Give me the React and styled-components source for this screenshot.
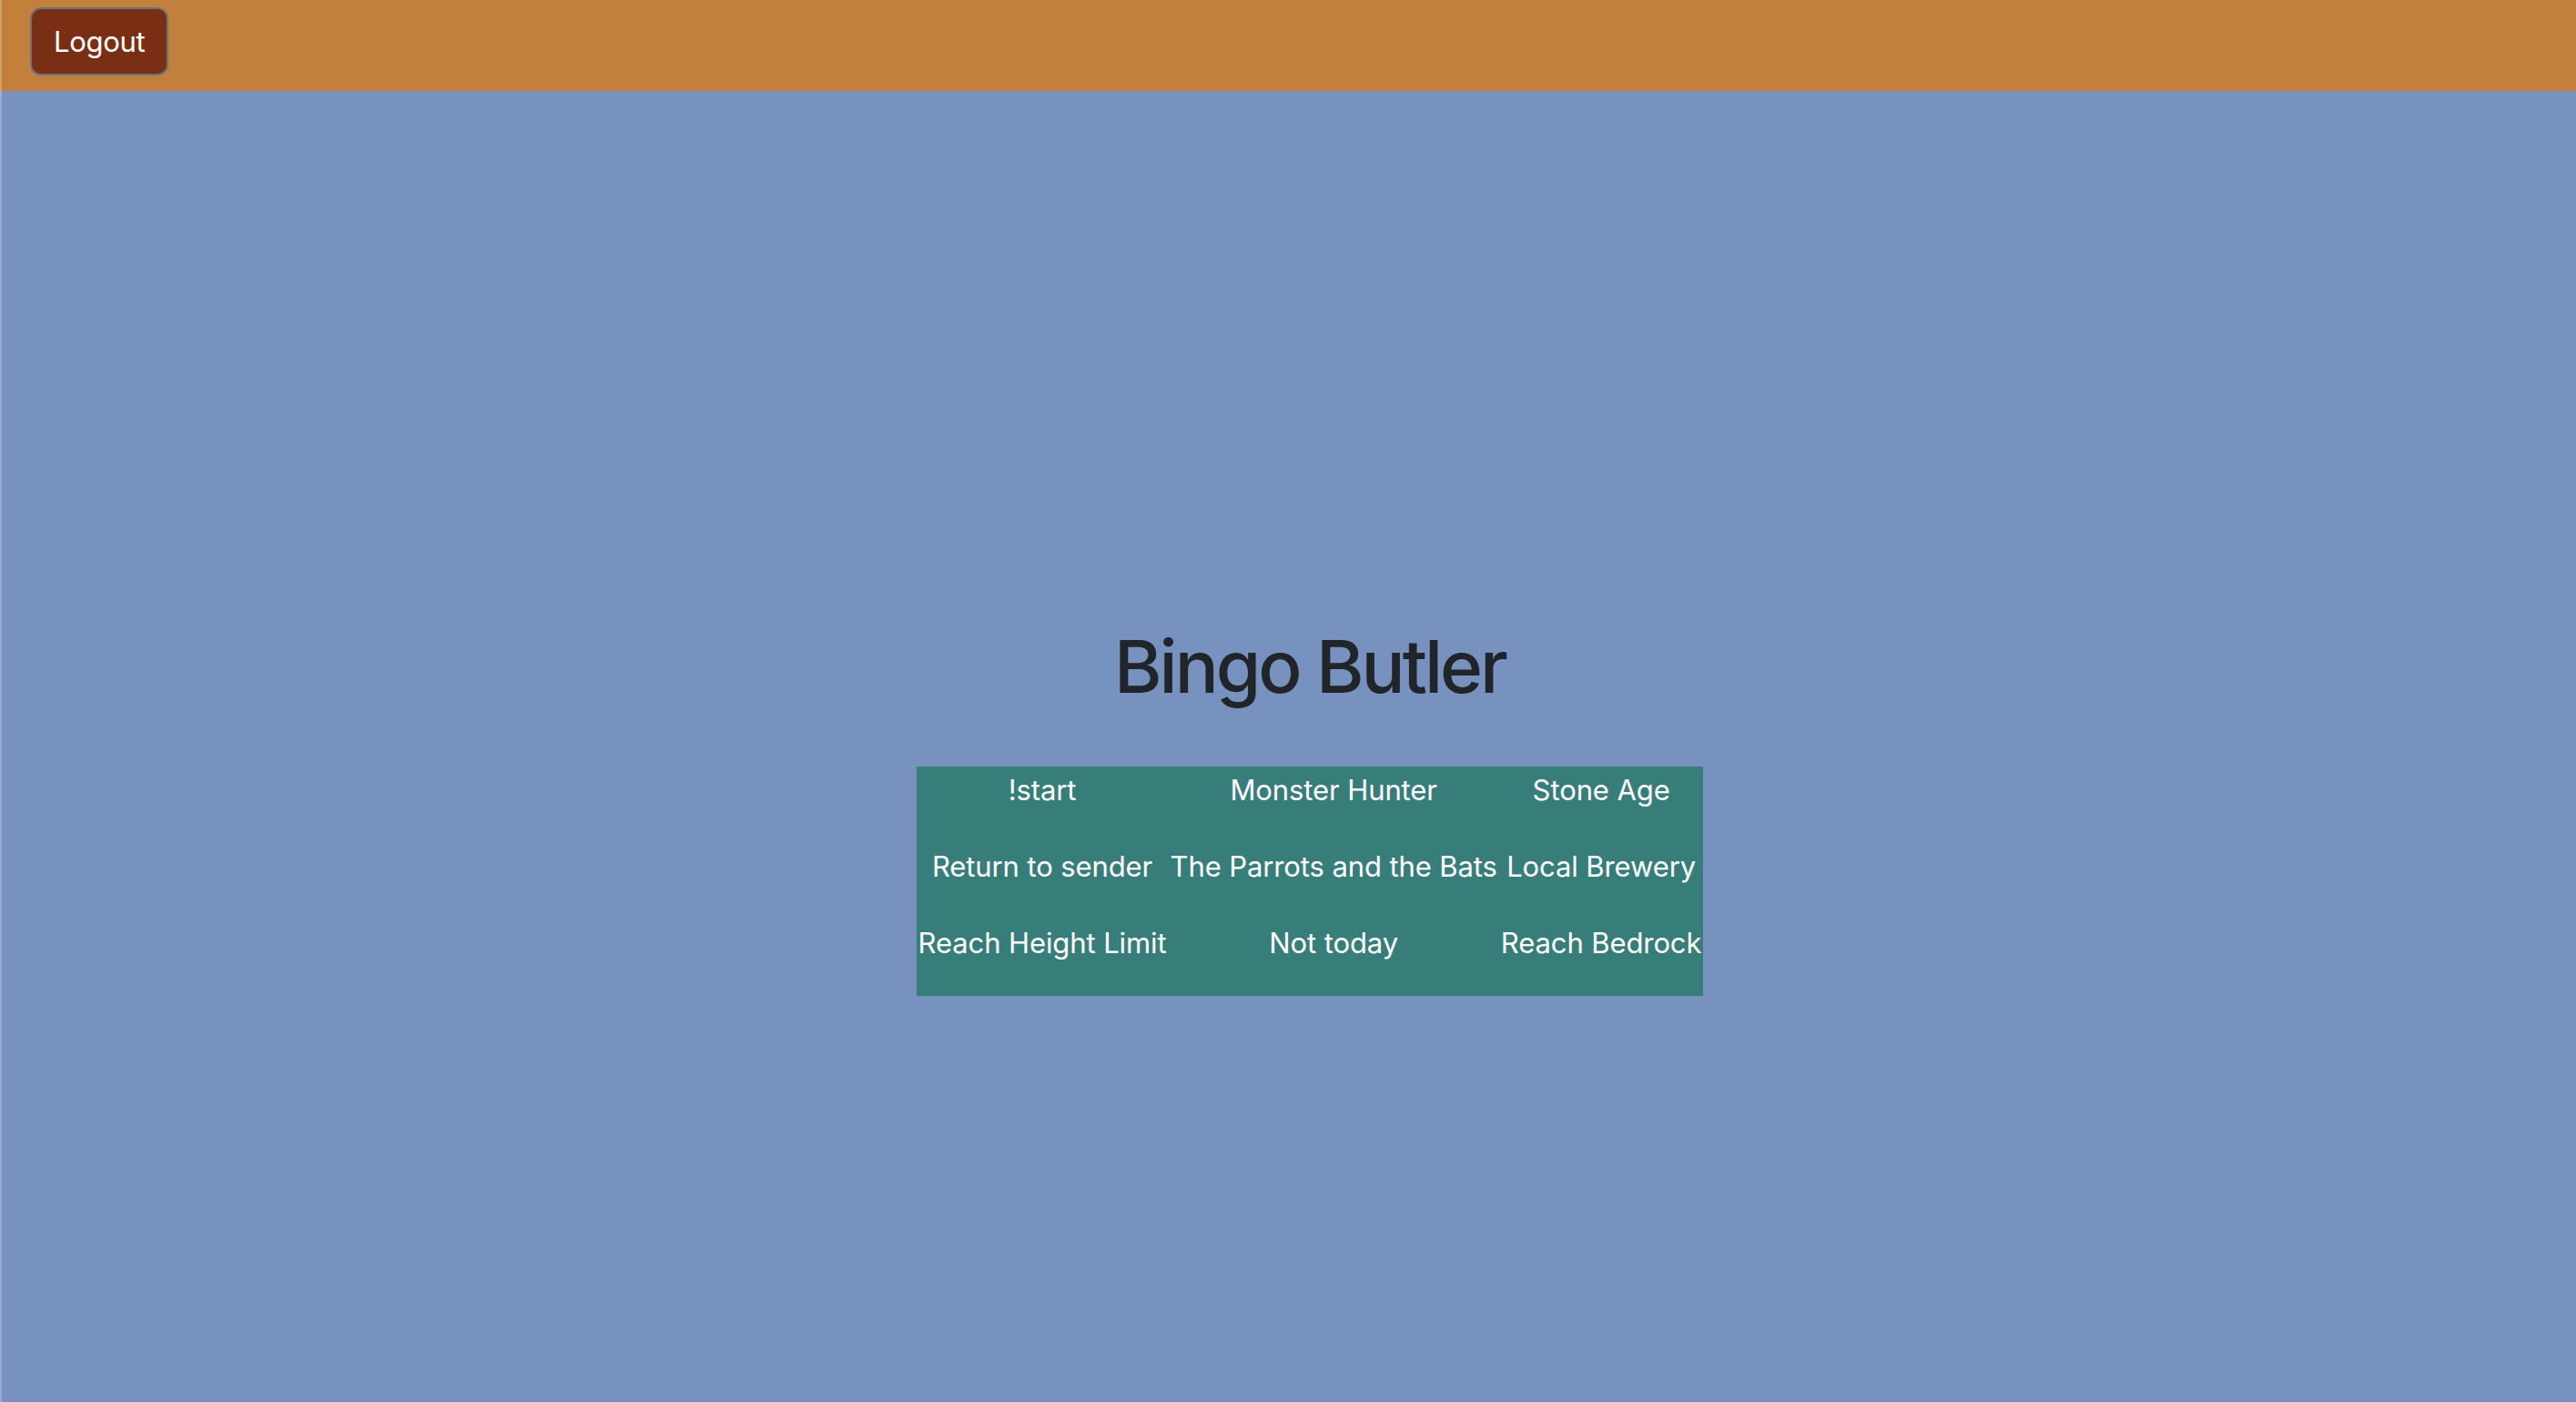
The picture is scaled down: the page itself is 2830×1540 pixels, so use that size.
import React from "react";
import styled, { createGlobalStyle } from "styled-components";

const GlobalStyle = createGlobalStyle`
  html, body {
    margin: 0;
    padding: 0;
    height: 100%;
  }
  body {
    font-family: Inter, "Noto Sans", "Liberation Sans", sans-serif;
    font-size: 31px;
    line-height: 48px;
    color: #212529;
    background-color: #7792bf;
  }
  #root {
    min-height: 100%;
  }
`;

const cells = [
  ["!start", "Monster Hunter", "Stone Age"],
  ["Return to sender", "The Parrots and the Bats", "Local Brewery"],
  ["Reach Height Limit", "Not today", "Reach Bedrock"],
];

const App = () => {
  return (
    <Page>
      <GlobalStyle />
      <Header>
        <LogoutButton type="button">Logout</LogoutButton>
      </Header>
      <Main>
        <Title>Bingo Butler</Title>
        <Board>
          <tbody>
            {cells.map((row, i) => (
              <tr key={i}>
                {row.map((label) => (
                  <Cell key={label}>
                    <p>{label}</p>
                  </Cell>
                ))}
              </tr>
            ))}
          </tbody>
        </Board>
      </Main>
    </Page>
  );
};

const Page = styled.div`
  min-height: 100vh;
  display: flex;
  flex-direction: column;
  background-color: #7792bf;
  &::before {
    content: "";
    position: fixed;
    top: 0;
    left: 0;
    bottom: 0;
    width: 2px;
    background-color: rgba(255, 255, 255, 0.25);
    z-index: 2;
  }
`;

const Header = styled.header`
  height: 100px;
  box-sizing: border-box;
  padding: 8px 0 0 33px;
  background-color: #c3803d;
  display: flex;
  align-items: flex-start;
`;

const LogoutButton = styled.button`
  font-family: inherit;
  font-size: 31px;
  letter-spacing: -0.3px;
  line-height: 47px;
  color: #fff;
  background-color: #7a2e14;
  border: 2px solid #6c757d;
  border-radius: 12px;
  padding: 12px 24px;
  cursor: pointer;
`;

const Main = styled.main`
  flex: 1;
  display: flex;
  flex-direction: column;
  align-items: center;
  padding: 584px 0 0 48px;
`;

const Title = styled.h1`
  font-size: 80px;
  font-weight: 500;
  letter-spacing: -3px;
  line-height: 96px;
  margin: 0 0 62px;
  color: #212529;
`;

const Board = styled.table`
  border-collapse: collapse;
  background-color: #377e7b;
  color: #fff;
`;

const Cell = styled.td`
  padding: 2px;
  text-align: center;
  vertical-align: middle;
  white-space: nowrap;
  letter-spacing: -0.1px;
  p {
    margin: 0 0 32px;
  }
`;

export default App;
